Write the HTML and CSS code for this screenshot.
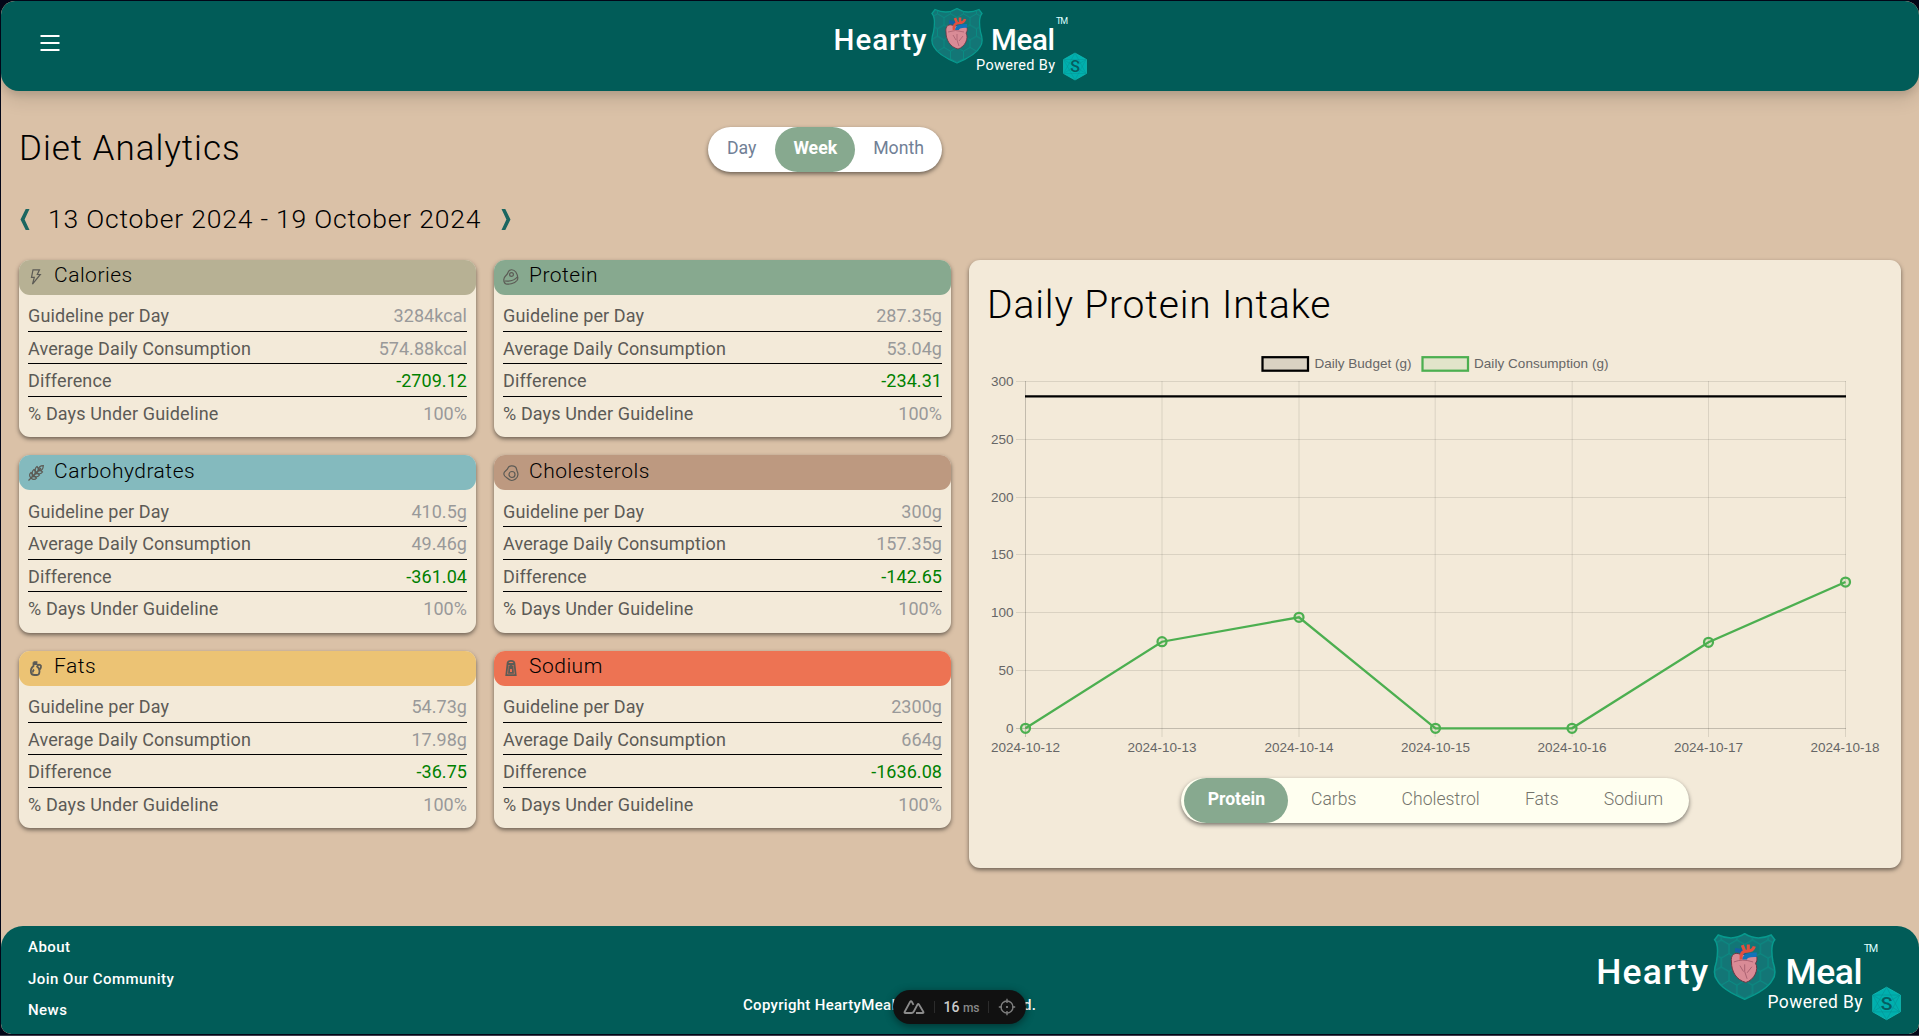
FILE: index.html
```html
<!DOCTYPE html>
<html lang="en">
<head>
<meta charset="utf-8">
<title>Diet Analytics</title>
<link rel="stylesheet" href="styles.css">
</head>
<body>
<svg class="defs" width="0" height="0" aria-hidden="true">
  <defs>
    <pattern id="cells" width="13" height="22.5" patternUnits="userSpaceOnUse" patternTransform="translate(96 2)">
      <path d="M6.5 0v3.75L13 7.5v7.5l-6.5 3.75v3.75M6.5 3.75L0 7.5V15l6.500 3.750" fill="none" stroke="#089086" stroke-width=".8"/>
    </pattern>
    <symbol id="logo" viewBox="0 0 252 73">
      <path d="M97 5.500L100 1.500Q112 7 122 .5Q132 7 144 1.500L147 5.500Q143 10 145.500 24Q149 34 145 39Q141 47 122 55Q103 47 99 39Q95 34 98.500 24Q101 10 97 5.500Z" fill="#137676" stroke="#079a8e" stroke-width="1.300"/>
      <path d="M97 5.500L100 1.500Q112 7 122 .5Q132 7 144 1.500L147 5.500Q143 10 145.500 24Q149 34 145 39Q141 47 122 55Q103 47 99 39Q95 34 98.500 24Q101 10 97 5.500Z" fill="url(#cells)"/>
      <path d="M111 24C110 18 114 15 119 18L128 17C133 17 133 23 131 25C134 30 130 39 123 41C115 39 111 32 111 24Z" fill="#d98b96" stroke="#6b3440" stroke-width=".8"/>
      <path d="M113 24Q120 21 129 24M122 26Q121 32 124 38M118 27L121 32M128 28L124 33" fill="none" stroke="#a8606f" stroke-width=".8"/>
      <path d="M114 14Q120 14 121 18" fill="none" stroke="#155fa5" stroke-width="3.400"/>
      <path d="M119 22Q118 15 124 15Q129 15 130 11M122 15L120 10M125 14L125 9.500" fill="none" stroke="#e2503f" stroke-width="2.600"/>
      <path d="M122 22Q122 17.500 132 18" fill="none" stroke="#1273ba" stroke-width="3.800"/>
      <path d="M240 45L251.500 51.500V65.500L240 72L228.500 65.500V51.500Z" fill="#00b0ae" stroke="#12bdb6" stroke-width=".7"/>
      <path d="M240 45L251 65.500H228.500ZM228.500 51.500H251L240 72ZM228.500 51.500L251 65.500M251 51.500L228.500 65.500" fill="none" stroke="#078f90" stroke-width=".4"/>
      <text class="logo-s" x="240" y="64" text-anchor="middle">S</text>
      <text class="logo-name" x="-1.500" y="42.300" textLength="93">Hearty</text>
      <text class="logo-name" x="156" y="42.300" textLength="64">Meal</text>
      <text class="logo-tm" x="221" y="15.500" textLength="12">TM</text>
      <text class="logo-by" x="141" y="62" textLength="79">Powered By</text>
    </symbol>
  </defs>
</svg>

<div class="page">
  <header class="topbar">
    <svg class="menu" viewBox="0 0 20 16"><path d="M.5 1H19.500M.5 8H19.500M.5 15H19.500" fill="none" stroke="#fff" stroke-width="2"/></svg>
    <svg class="logo"><use href="#logo"/></svg>
  </header>

  <main class="content">
    <div class="title-row">
      <h1 class="title">Diet Analytics</h1>
      <div class="pill range">
        <span class="opt">Day</span><span class="opt on">Week</span><span class="opt">Month</span>
      </div>
    </div>
    <div class="dates">
      <svg class="arrow" viewBox="0 0 10 21"><path d="M5.700 0H9.500L4.600 10.500L9.500 21H5.700L.5 10.500Z" fill="#1b6660"/></svg>
      <span class="date-text">13 October 2024 - 19 October 2024</span>
      <svg class="arrow" viewBox="0 0 10 21"><path d="M4.300 0H.5L5.400 10.500L.5 21H4.300L9.500 10.500Z" fill="#1b6660"/></svg>
    </div>

    <div class="board">
      <section class="card">
        <h2 class="card-head calories"><svg class="icon" viewBox="0 0 16 16"><path d="M5 .8H11.500L9.300 5.500H12.300L4.500 15.200L6.300 8.300H3.500Z"/></svg>Calories</h2>
        <dl class="rows">
          <div class="row"><dt>Guideline per Day</dt><dd>3284kcal</dd></div>
          <div class="row"><dt>Average Daily Consumption</dt><dd>574.88kcal</dd></div>
          <div class="row"><dt>Difference</dt><dd class="under">-2709.12</dd></div>
          <div class="row"><dt>% Days Under Guideline</dt><dd>100%</dd></div>
        </dl>
      </section>
      <section class="card">
        <h2 class="card-head protein"><svg class="icon" viewBox="0 0 16 16"><path d="M.8 10.500C.8 7 4 7 5 3.500C6 0 10.500-.2 12.800 3C15 6.500 15.300 9.500 14 11.500C11.500 15 5 15.500 3 15C1.500 14.500.8 12.500.8 10.500ZM2 12C7 12.500 12 11 14.800 7.500"/><circle cx="8.500" cy="5.500" r="1.900"/></svg>Protein</h2>
        <dl class="rows">
          <div class="row"><dt>Guideline per Day</dt><dd>287.35g</dd></div>
          <div class="row"><dt>Average Daily Consumption</dt><dd>53.04g</dd></div>
          <div class="row"><dt>Difference</dt><dd class="under">-234.31</dd></div>
          <div class="row"><dt>% Days Under Guideline</dt><dd>100%</dd></div>
        </dl>
      </section>
      <section class="card">
        <h2 class="card-head carbs"><svg class="icon" viewBox="0 0 16 16"><path d="M.5 15.500L13 3M11 5C10 2 12.500.8 15.300.7C15.200 3.500 14 6 11 5ZM8.500 7.500C6.500 5.500 7 3 9 1.500C11 3.500 10.500 5.500 8.500 7.500ZM8.500 7.500C10.500 9.500 13 9 14.500 7C12.500 5 10.500 5.500 8.500 7.500ZM5.500 10.500C3.500 8.500 4 6 6 4.500C8 6.500 7.500 8.500 5.500 10.500ZM5.500 10.500C7.500 12.500 10 12 11.500 10C9.500 8 7.500 8.500 5.500 10.500ZM3 13C1 11 1.200 9 3 7.500C5 9.500 4.500 11.500 3 13ZM3 13C5 15 7 14.800 8.500 13C6.500 11 4.500 11.500 3 13Z"/></svg>Carbohydrates</h2>
        <dl class="rows">
          <div class="row"><dt>Guideline per Day</dt><dd>410.5g</dd></div>
          <div class="row"><dt>Average Daily Consumption</dt><dd>49.46g</dd></div>
          <div class="row"><dt>Difference</dt><dd class="under">-361.04</dd></div>
          <div class="row"><dt>% Days Under Guideline</dt><dd>100%</dd></div>
        </dl>
      </section>
      <section class="card">
        <h2 class="card-head chol"><svg class="icon" viewBox="0 0 16 16"><path d="M5 3C6 .5 10 .2 12.500 2C14 3.500 13.500 5.500 14.500 7C15.500 10 14.500 12.500 12.500 14C10 16 7 15.500 5.500 14C4 12.500 1 12 .8 9C.8 6 4 6 5 3Z"/><circle cx="9" cy="9.500" r="3"/></svg>Cholesterols</h2>
        <dl class="rows">
          <div class="row"><dt>Guideline per Day</dt><dd>300g</dd></div>
          <div class="row"><dt>Average Daily Consumption</dt><dd>157.35g</dd></div>
          <div class="row"><dt>Difference</dt><dd class="under">-142.65</dd></div>
          <div class="row"><dt>% Days Under Guideline</dt><dd>100%</dd></div>
        </dl>
      </section>
      <section class="card">
        <h2 class="card-head fats"><svg class="icon bold" viewBox="0 0 16 16"><path d="M5.500 2.200H8.500V5M5.500 2.200V6C3 8 2.500 10 3 12.500C3.500 15 5 15 6.500 15H9C11 15 11.500 12.500 11.500 11C11.500 9 10 7 8.500 6M9 5.500C11 4 13.500 5 13 7C12.800 9 12 9.500 11.200 10M6 9.500Q4.500 11 5 12.500M5.500 4H8.500"/></svg>Fats</h2>
        <dl class="rows">
          <div class="row"><dt>Guideline per Day</dt><dd>54.73g</dd></div>
          <div class="row"><dt>Average Daily Consumption</dt><dd>17.98g</dd></div>
          <div class="row"><dt>Difference</dt><dd class="under">-36.75</dd></div>
          <div class="row"><dt>% Days Under Guideline</dt><dd>100%</dd></div>
        </dl>
      </section>
      <section class="card">
        <h2 class="card-head sodium"><svg class="icon bold" viewBox="0 0 16 16"><path d="M4.500 4C4.500 1.500 6 .8 8 .8S11.500 1.500 11.500 4ZM4.500 4L3.300 15.200H12.700L11.500 4M6.500 5.500L6 12.800H10L9.500 5.500M8 5V9"/></svg>Sodium</h2>
        <dl class="rows">
          <div class="row"><dt>Guideline per Day</dt><dd>2300g</dd></div>
          <div class="row"><dt>Average Daily Consumption</dt><dd>664g</dd></div>
          <div class="row"><dt>Difference</dt><dd class="under">-1636.08</dd></div>
          <div class="row"><dt>% Days Under Guideline</dt><dd>100%</dd></div>
        </dl>
      </section>

      <section class="panel">
        <h2 class="panel-title">Daily Protein Intake</h2>
        <svg class="chart" viewBox="0 0 896 420">
          <g stroke-width="2.250">
            <rect x="275.500" y="17.200" width="45.500" height="13.500" fill="#000" fill-opacity=".1" stroke="#000"/>
            <rect x="435.500" y="17.200" width="45.500" height="13.500" fill="#4caf50" fill-opacity=".1" stroke="#4caf50"/>
          </g>
          <text x="327.500" y="28" textLength="97">Daily Budget (g)</text>
          <text x="487" y="28" textLength="134.500">Daily Consumption (g)</text>
          <path class="grid" d="M29 41.500H859M29 99.500H859M29 157.500H859M29 214.500H859M29 272.500H859M29 330.500H859M175 41V397M312 41V397M448.200 41V397M585.200 41V397M721.500 41V397M858.500 41V397"/>
          <path class="axis" d="M29 388.500H859M38.500 41V397"/>
          <g class="ylab">
            <text x="26.500" y="46">300</text><text x="26.500" y="103.500">250</text><text x="26.500" y="161.500">200</text><text x="26.500" y="219">150</text><text x="26.500" y="277">100</text><text x="26.500" y="335">50</text><text x="26.500" y="392.500">0</text>
          </g>
          <g class="xlab">
            <text x="38.500" y="412">2024-10-12</text><text x="175" y="412">2024-10-13</text><text x="312" y="412">2024-10-14</text><text x="448.500" y="412">2024-10-15</text><text x="585" y="412">2024-10-16</text><text x="721.500" y="412">2024-10-17</text><text x="858" y="412">2024-10-18</text>
          </g>
          <path d="M38 56.300H859" stroke="#000" stroke-width="2.250"/>
          <g class="intake">
            <path d="M38.500 388.300L175 301.700L312 277.300L448.500 388.300H585L721.500 302.300L858.500 242"/>
            <circle cx="38.500" cy="388.300" r="4.500"/><circle cx="175" cy="301.700" r="4.500"/><circle cx="312" cy="277.300" r="4.500"/><circle cx="448.500" cy="388.300" r="4.500"/><circle cx="585" cy="388.300" r="4.500"/><circle cx="721.500" cy="302.300" r="4.500"/><circle cx="858.500" cy="242" r="4.500"/>
          </g>
        </svg>
        <div class="pill nutrients">
          <span class="opt on">Protein</span><span class="opt">Carbs</span><span class="opt">Cholestrol</span><span class="opt">Fats</span><span class="opt">Sodium</span>
        </div>
      </section>
    </div>
  </main>

  <footer class="footer">
    <nav class="links"><a>About</a><a>Join Our Community</a><a>News</a></nav>
    <p class="copyright">Copyright HeartyMeal. All rights reserved.</p>
    <svg class="logo large"><use href="#logo"/></svg>
  </footer>
</div>

<div class="devtools">
  <svg width="22" height="16" viewBox="0 0 22 16"><path d="M8.500 14H2.300Q1 14 1.700 12.700L7 3Q8 1.500 9 3L10.500 5.800M8.500 14Q10 14 10.800 12.500L14.500 5.500Q15.200 4.500 16 5.500L20.300 12.700Q21 14 19.500 14H13" fill="none" stroke="#8b8b8b" stroke-width="1.800"/></svg>
  <i class="sep"></i>
  <span class="ms">16 <small>ms</small></span>
  <i class="sep"></i>
  <svg width="18" height="18" viewBox="0 0 18 18"><g fill="none" stroke="#7d7d7d" stroke-width="1.400"><circle cx="9" cy="9" r="6"/><path d="M9 .8V5M9 13V17.200M.8 9H4M14 9H17.200"/></g><circle cx="9" cy="9" r="1.100" fill="#8b8b8b"/></svg>
</div>
</body>
</html>
```

FILE: styles.css
```css
* { box-sizing: border-box; }
html, body { height: 100%; }
html { background: #020617; }
body {
  margin: 0;
  padding: 1px 0 2px 1px;
  background: #020617;
  border-bottom: 1px solid #3b3d49;
  font-family: Roboto, "Open Sans", sans-serif;
  font-size: 18px;
  color: #000;
  overflow: hidden;
}
h1, h2, p, dl, dd { margin: 0; font-weight: 300; }
.defs { position: absolute; }
.page {
  width: 1918px;
  height: 1033px;
  display: flex;
  flex-direction: column;
  background: #dac1a7;
  border-radius: 14px 14px 10px 10px;
  overflow: hidden;
}
.topbar {
  height: 90px;
  flex: none;
  display: grid;
  grid-template-columns: 1fr 252px 1fr;
  align-items: start;
  padding: 7px 37px 0 39px;
  background: #015c58;
  border-radius: 14px 14px 18px 18px;
  box-shadow: 0 10px 17px rgba(0,0,0,.1), 0 4px 7px rgba(0,0,0,.1);
}
.menu { width: 20px; height: 16px; margin-top: 27px; }
.logo { width: 252px; height: 73px; overflow: visible; }
.logo.large { width: 303px; height: 88px; }
.logo-name { font-size: 29.5px; font-weight: 500; fill: #fff; }
.logo-tm { font-size: 9px; fill: #dff; }
.logo-by { font-size: 14.5px; fill: #fff; }
.logo-s { font-size: 16px; font-weight: 500; fill: #055e60; }

.content { flex: 1; padding: 0 18px; }
.title-row {
  display: flex;
  justify-content: space-between;
  width: 923px;
  padding-top: 36px;
}
.title { font-size: 35px; line-height: 43px; letter-spacing: .98px; }
.pill {
  display: flex;
  height: 45px;
  border-radius: 23px;
  line-height: 43px;
  box-shadow: 0 2px 4px rgba(0,0,0,.5);
}
.opt.on { background: #87a98f; color: #fff; font-weight: 700; border-radius: 23px; }
.range { background: #fff; color: #718096; padding-left: 1px; font-size: 17.700px; }
.range .opt { padding: 0 18px; }
.range .opt:first-child { padding-right: 19px; }

.dates { display: flex; align-items: center; height: 34px; margin: 30px 0 0 1px; }
.arrow { width: 10px; height: 21px; }
.date-text { font-size: 26.500px; font-weight: 300; line-height: 34px; margin: 0 20px 0 18px; letter-spacing: .8px; }

.board {
  display: grid;
  grid-template-columns: repeat(4, 457px);
  grid-template-rows: repeat(3, 177.400px) 4px;
  gap: 18px;
  margin-top: 24px;
}
.card {
  background: #f3ead9;
  border-radius: 11px;
  box-shadow: 0 2px 4px rgba(0,0,0,.5);
}
.card-head {
  display: flex;
  align-items: center;
  height: 34.800px;
  padding: 0 9px 3px;
  border-radius: 11px;
  font-size: 21px;
  line-height: 31px;
  letter-spacing: .5px;
}
.icon {
  width: 16px;
  height: 16px;
  margin: 3px 9px 0 0;
  padding-right: 0;
  fill: none;
  stroke: #5c5b55;
  stroke-width: 1.200;
  overflow: visible;
  flex: none;
  margin-right: 10px;
}
.icon.bold { stroke-width: 1.800; }
.calories { background: #b7b194; }
.protein { background: #87a98f; }
.carbs { background: #84babe; }
.chol { background: #bd9980; }
.fats { background: #ecc374; }
.sodium { background: #ed7353; }
.rows { padding: 4.500px 9px 0; }
.row {
  display: flex;
  justify-content: space-between;
  height: 32.500px;
  line-height: 33px;
  border-bottom: 1px solid #000;
}
.row:last-child { border-bottom: 0; }
dt { color: #5c5a56; font-weight: 400; letter-spacing: .12px; }
dd { color: #999; font-weight: 400; letter-spacing: .05px; }
dd.under { color: #008000; letter-spacing: .05px; }

.panel {
  grid-column: 3 / 5;
  grid-row: 1 / 5;
  padding: 18px;
  height: 607.500px;
  display: flex;
  flex-direction: column;
  align-items: center;
  background: #f3ead9;
  border-radius: 11px;
  box-shadow: 0 2px 4px rgba(0,0,0,.5);
}
.panel-title { align-self: stretch; font-size: 39px; line-height: 54px; height: 62px; letter-spacing: .85px; }
.chart { width: 896px; height: 420px; flex: none; }
.chart text { font: 13.500px "Liberation Sans", Arial, sans-serif; fill: #666; }
.ylab text { text-anchor: end; }
.xlab text { text-anchor: middle; }
.grid { stroke: rgba(0,0,0,.1); fill: none; }
.axis { stroke: rgba(0,0,0,.2); fill: none; }
.intake { fill: none; stroke: #4caf50; stroke-width: 2.250; }
.intake circle { fill: rgba(76,175,80,.1); }
.nutrients { margin-top: 18px; padding: 0 3px; background: #fffff0; color: #74746c; font-weight: 300; font-size: 17.600px; }
.nutrients .opt { padding: 0 22.600px; }
.nutrients .opt.on { padding: 0 23.300px; }

.footer {
  height: 108px;
  flex: none;
  display: grid;
  grid-template-columns: 715px 1fr 303px;
  padding: 7px 18px 0 27px;
  background: #015c58;
  border-radius: 22px 22px 10px 10px;
  color: #fff;
  font-size: 15px;
}
.links { display: flex; flex-direction: column; line-height: 31.500px; margin-top: -1px; font-weight: 500; letter-spacing: .47px; }
.copyright { font-weight: 500; padding-top: 62px; line-height: 20px; white-space: nowrap; letter-spacing: .3px; }

.devtools {
  position: absolute;
  left: 893px;
  top: 990px;
  width: 133px;
  height: 34px;
  display: flex;
  align-items: center;
  justify-content: space-between;
  padding: 0 10px;
  background: #111;
  border-radius: 17px;
  box-shadow: 0 2px 9px rgba(0,0,0,.45);
}
.sep { width: 1px; height: 12px; background: #2c2c2c; }
.ms { color: #ccc; font-size: 14px; font-weight: 500; }
.ms small { color: #888; font-size: 12px; }
```
